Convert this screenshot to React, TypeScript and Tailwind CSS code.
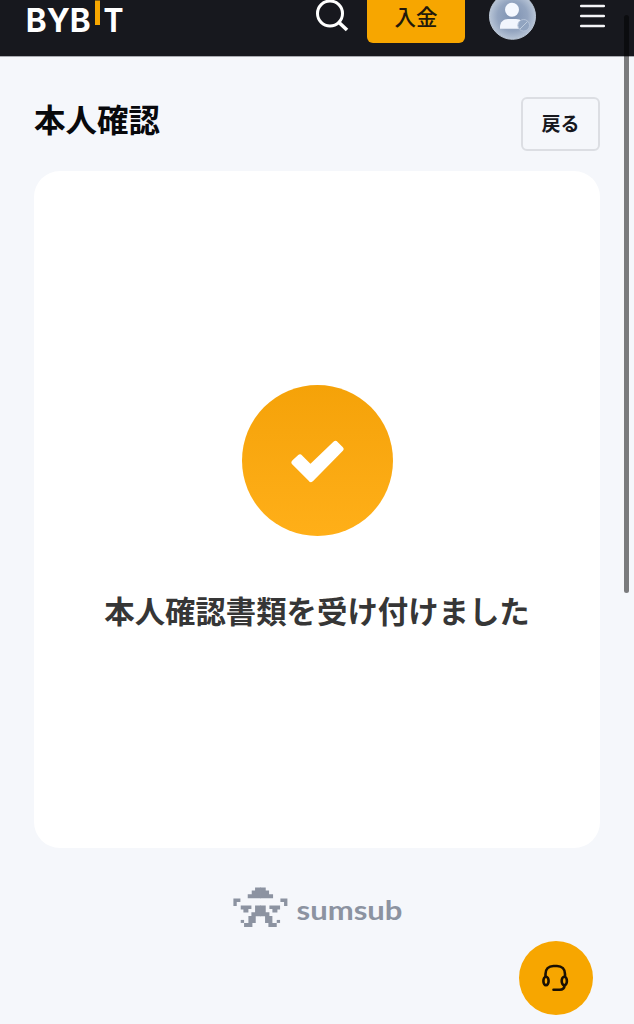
import React from "react";

const jp = "font-['Noto_Sans_CJK_JP',sans-serif]";

function BybitLogo() {
  return (
    <svg className="ml-[26px] block shrink-0 overflow-visible" width="98" height="56" viewBox="0 0 98 56" aria-label="BYBIT">
      <g fill="#fff" fontFamily="Inter, sans-serif" fontWeight="700" fontSize="33">
        <text x="-0.2" y="32.4" textLength="65" lengthAdjust="spacingAndGlyphs">BYB</text>
        <text x="77.4" y="32.4" textLength="20" lengthAdjust="spacingAndGlyphs">T</text>
      </g>
      <rect x="69" y="0.5" width="5" height="24.5" fill="#f7a600" />
    </svg>
  );
}

function Avatar() {
  return (
    <svg className="ml-6 block shrink-0" width="48" height="56" viewBox="0 0 48 56">
      <defs>
        <radialGradient id="avatar" cx="0.5" cy="0.5" r="0.5">
          <stop offset="0" stopColor="#7e92b2" />
          <stop offset="0.65" stopColor="#94a5c0" />
          <stop offset="1" stopColor="#b7c4d6" />
        </radialGradient>
      </defs>
      <circle cx="23.5" cy="16.3" r="23" fill="url(#avatar)" stroke="#bdc9d8" strokeWidth="1" />
      <circle cx="23" cy="9.8" r="7" fill="#f5f8ff" />
      <path d="M11 28.8V27c0-5 3.5-8 8-8h8c5 0 8 3 8 8v1.8Z" fill="#f1f5fd" />
      <circle cx="34.7" cy="25.3" r="5.8" fill="#91a4c0" stroke="#b5c3d8" strokeWidth="1" />
      <path d="m31 29 7.5-7.5" stroke="#c0cddd" strokeWidth="1" />
    </svg>
  );
}

function SumsubRobotHalf() {
  return (
    <>
      <path d="M82 0H65v9H55v11H43v12h39Z" />
      <path d="M0 33h21v10H10v12H0Z" />
      <path d="M22 54h32v10h-9v11H30v-9h-8Z" />
      <path d="M82 54H65v20H54v11h-9v21H32v12h25v-12h10V86h15Z" />
      <path d="M22 97h10v9H22Z" />
    </>
  );
}

function SumsubLogo() {
  return (
    <svg className="block" width="171" height="42" viewBox="0 0 171 42" fill="#8c93a1" aria-label="sumsub">
      <g transform="translate(1.4 0.6) scale(.33333)">
        <SumsubRobotHalf />
        <g transform="translate(162 0) scale(-1 1)">
          <SumsubRobotHalf />
        </g>
      </g>
      <text x="64.5" y="33" fontFamily="Lato, sans-serif" fontWeight="700" fontSize="26" textLength="106" lengthAdjust="spacingAndGlyphs">sumsub</text>
    </svg>
  );
}

export default function App() {
  return (
    <div className={`relative flex h-[1024px] w-[634px] flex-col overflow-hidden bg-[#f5f7fb] ${jp}`}>
      <header className="flex h-14 shrink-0 items-start bg-[#17181e]">
        <BybitLogo />
        <svg className="ml-auto block shrink-0" width="34" height="34" viewBox="0 0 34 34" fill="none" stroke="#fff" strokeWidth="3">
          <circle cx="15" cy="13.5" r="12.5" />
          <path d="m23.5 22 8.5 8" strokeWidth="3.6" />
        </svg>
        <button className="ml-[18px] flex h-[43px] w-[98px] items-start justify-center rounded-b-[6px] bg-[#f7a600] text-[21.5px] leading-[31px] font-medium text-[#21180b]">
          入金
        </button>
        <Avatar />
        <svg className="mr-[28px] ml-[42px] block shrink-0" width="27" height="32" viewBox="0 0 27 32" stroke="#f4f4f7" strokeWidth="2.5" strokeLinecap="round">
          <path d="M2.2 6h22.6M2.2 16h22.6M2.2 26h22.6" />
        </svg>
      </header>

      <main className="flex flex-1 flex-col border-t border-[#a9abb1] px-[34px]">
        <div className="mt-10 flex h-[54px] items-center justify-between">
          <h1 className="-mt-3 text-[31.5px] leading-[46px] font-bold text-[#08090c]">本人確認</h1>
          <button className="flex h-[54px] w-[79px] justify-center rounded-[6px] border-2 border-[#dcdee3] text-[19px] leading-[48px] font-bold text-[#17181e]">
            戻る
          </button>
        </div>

        <section className="mt-5 flex h-[677px] flex-col items-center rounded-[26px] bg-white pt-[214px]">
          <div className="flex size-[151px] items-center justify-center rounded-full bg-linear-to-b from-[#f5a208] to-[#ffaf18]">
            <svg className="translate-x-px translate-y-px" width="56" height="44" viewBox="0 0 56 44" fill="#fff" stroke="#fff" strokeWidth="6" strokeLinejoin="round">
              <path d="m4.5 22.5 5.5-5L20.5 28 45.5 4l5 5L21 39Z" />
            </svg>
          </div>
          <p className="mt-[49px] text-[30.4px] leading-[50px] font-bold whitespace-nowrap text-[#363636]">本人確認書類を受け付けました</p>
        </section>

        <footer className="mt-[39px] flex justify-center">
          <SumsubLogo />
        </footer>
      </main>

      <button className="absolute top-[941px] left-[519px] flex size-[74px] items-center justify-center rounded-full bg-[#f7a600]">
        <svg width="28" height="30" viewBox="0 0 28 30" fill="none" stroke="#1a1003" strokeWidth="2.6" strokeLinecap="round" strokeLinejoin="round">
          <path d="M3.5 13.5V11C3.5 6 6.500 3 11.500 3h3.500c5 0 8 3 8 8v2.500" />
          <ellipse cx="4" cy="18" rx="2.600" ry="4.200" />
          <ellipse cx="22.300" cy="18" rx="2.600" ry="4.200" />
          <path d="M22.500 22.300c0 3-2 4.500-5 4.500h-6" />
        </svg>
      </button>
      <div className="absolute top-[15px] left-[624px] h-[578px] w-[5px] rounded-full bg-black/50" />
    </div>
  );
}
